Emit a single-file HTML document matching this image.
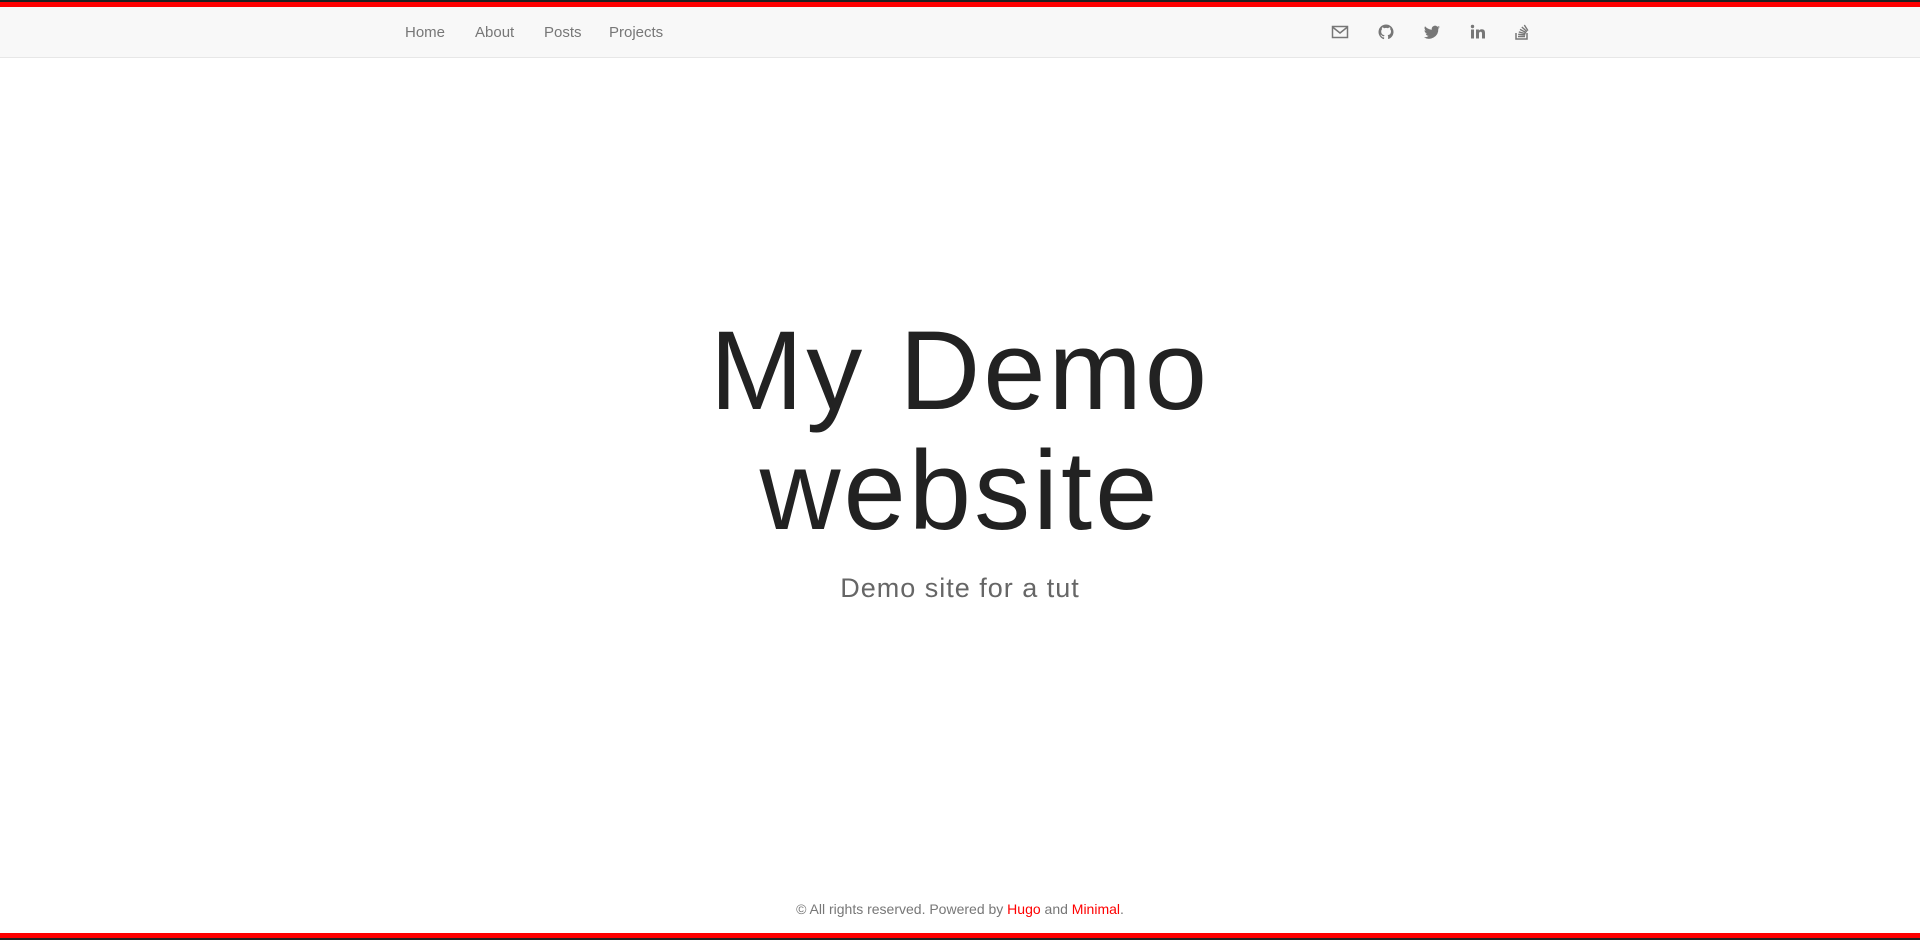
<!DOCTYPE html>
<html><head><meta charset="utf-8"><style>
html,body{margin:0;padding:0;width:1920px;height:940px;overflow:hidden;background:#fff;font-family:"Liberation Sans",sans-serif;}
.top{position:absolute;left:0;top:0;width:1920px;height:2px;background:#222}
.red1{position:absolute;left:0;top:2px;width:1920px;height:5px;background:#f00}
nav{position:absolute;left:0;top:7px;width:1920px;height:50px;background:#f8f8f8;border-bottom:1px solid #e7e7e7}
nav a{position:absolute;top:17px;font-size:15px;color:#777;text-decoration:none;line-height:18px}
.ic{position:absolute;top:16px;width:18px;height:18px}
.l1,.l2{position:absolute;width:1920px;text-align:center;font-size:112px;color:#222;line-height:120px;letter-spacing:3px}
.l1{top:311px}
.l2{top:431px}
.sub{position:absolute;top:571px;width:1920px;text-align:center;font-size:27px;color:#666;line-height:34px;letter-spacing:1px}
.foot{position:absolute;top:900px;width:1920px;text-align:center;font-size:14px;color:#777;line-height:18px}
.foot a{color:#f00;text-decoration:none}
.red2{position:absolute;left:0;top:933px;width:1920px;height:5px;background:#f00}
.bot{position:absolute;left:0;top:938px;width:1920px;height:2px;background:#222}
</style></head><body>
<div class="top"></div><div class="red1"></div>
<nav>
<a style="left:405px">Home</a>
<a style="left:475px">About</a>
<a style="left:544px">Posts</a>
<a style="left:609px">Projects</a>
<svg class="ic" style="left:1331px" viewBox="0 0 18 18"><rect x="1.5" y="3.5" width="15" height="11" fill="none" stroke="#777" stroke-width="1.5"/><path d="M1.5 4 L9 10 L16.5 4" fill="none" stroke="#777" stroke-width="1.5"/></svg>
<svg class="ic" style="left:1377px" viewBox="0 0 18 18"><path d="M9 1.5a7.5 7.5 0 0 0-2.4 14.6c.4 0 .5-.2.5-.4v-1.4c-2.1.5-2.5-1-2.5-1-.4-.9-.9-1.1-.9-1.1-.7-.5 0-.5 0-.5.8 0 1.2.8 1.2.8.7 1.2 1.8.8 2.2.6.1-.5.3-.8.5-1-1.7-.2-3.4-.8-3.4-3.7 0-.8.3-1.5.8-2-.1-.2-.3-1 .1-2 0 0 .6-.2 2.1.8a7 7 0 0 1 3.8 0c1.4-1 2.100-.8 2.1-.8.4 1 .1 1.8.1 2 .5.5.8 1.2.8 2 0 2.9-1.8 3.5-3.4 3.7.3.2.5.7.5 1.4v2.1c0 .2.1.5.6.4A7.5 7.5 0 0 0 9 1.5z" fill="#777"/></svg>
<svg class="ic" style="left:1423px" viewBox="0 0 18 18"><path d="M17 4.2c-.6.3-1.2.4-1.9.5.7-.4 1.2-1 1.4-1.8-.6.4-1.3.6-2.1.8a3.3 3.3 0 0 0-5.6 3A9.3 9.3 0 0 1 2 3.3a3.3 3.3 0 0 0 1 4.4c-.5 0-1-.2-1.5-.4 0 1.6 1.1 2.9 2.6 3.2-.5.1-1 .2-1.5.1.4 1.3 1.6 2.3 3.1 2.3A6.6 6.6 0 0 1 .9 14.2 9.3 9.3 0 0 0 15.300 6v-.4c.7-.4 1.2-1 1.7-1.4z" fill="#777"/></svg>
<svg class="ic" style="left:1469px" viewBox="0 0 18 18"><rect x="2" y="6.5" width="3" height="9" fill="#777"/><circle cx="3.5" cy="3.5" r="1.7" fill="#777"/><path d="M7 6.5h2.9v1.3c.5-.9 1.5-1.5 2.9-1.5 2.4 0 3.2 1.4 3.2 3.8v5.4h-3v-4.8c0-1.1-.2-2-1.4-2s-1.6.9-1.6 2v4.8H7z" fill="#777"/></svg>
<svg class="ic" style="left:1513px" viewBox="0 0 18 18"><path d="M3 10v6h11v-6" fill="none" stroke="#777" stroke-width="1.5"/><path d="M5 13.5h7M5.2 11.3l7 .6M5.8 8.9l6.8 1.8M7 6.4l6.2 3.2M8.8 4l5.2 4.6M11.3 2l3.6 5.6" stroke="#777" stroke-width="1.4"/></svg>
</nav>
<div class="l1">My Demo</div>
<div class="l2">website</div>
<div class="sub">Demo site for a tut</div>
<div class="foot">© All rights reserved. Powered by <a>Hugo</a> and <a>Minimal</a>.</div>
<div class="red2"></div><div class="bot"></div>
</body></html>
